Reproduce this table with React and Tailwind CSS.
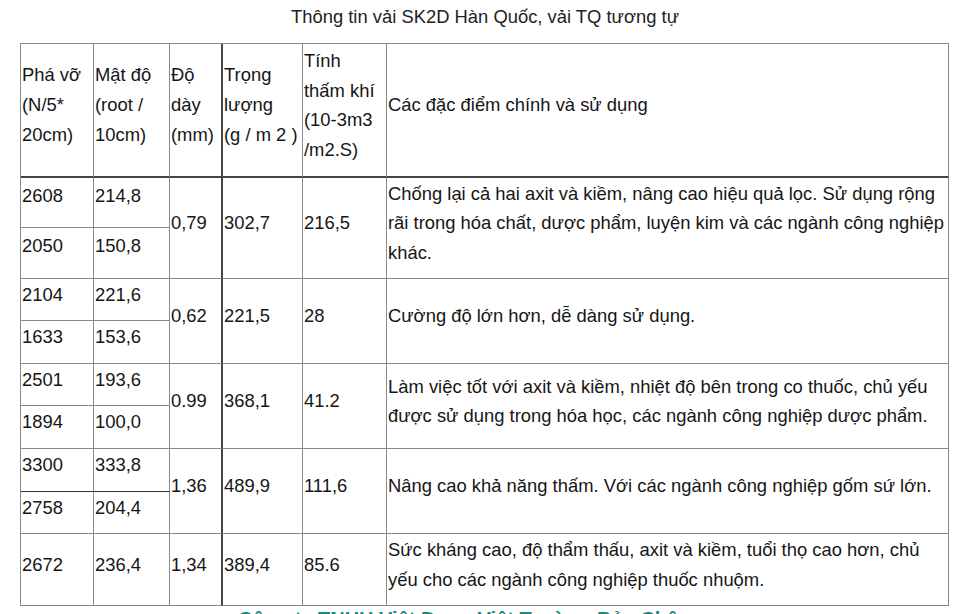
const rows = [
  {
    a: ["2608", "214,8"],
    b: ["2050", "150,8"],
    day: "0,79",
    trong: "302,7",
    tham: "216,5",
    desc: "Chống lại cả hai axit và kiềm, nâng cao hiệu quả lọc. Sử dụng rộng rãi trong hóa chất, dược phẩm, luyện kim và các ngành công nghiệp khác.",
  },
  {
    a: ["2104", "221,6"],
    b: ["1633", "153,6"],
    day: "0,62",
    trong: "221,5",
    tham: "28",
    desc: "Cường độ lớn hơn, dễ dàng sử dụng.",
  },
  {
    a: ["2501", "193,6"],
    b: ["1894", "100,0"],
    day: "0.99",
    trong: "368,1",
    tham: "41.2",
    desc: "Làm việc tốt với axit và kiềm, nhiệt độ bên trong co thuốc, chủ yếu được sử dụng trong hóa học, các ngành công nghiệp dược phẩm.",
  },
  {
    a: ["3300", "333,8"],
    b: ["2758", "204,4"],
    day: "1,36",
    trong: "489,9",
    tham: "111,6",
    desc: "Nâng cao khả năng thấm. Với các ngành công nghiệp gốm sứ lớn.",
    darkSplit: true,
  },
];

const cell = "flex items-center pl-[1px] pr-[1px] pb-[10px] border-r border-b border-[#8a8a8a]";
const dark = "flex items-center pl-[1px] pb-[10px] border-r-2 border-b border-r-[#444] border-b-[#8a8a8a]";

export default function App() {
  return (
    <div
      className="w-[970px] h-[614px] overflow-hidden bg-white text-[#161616] text-[18.4px] leading-[30px] pt-[2px]"
      style={{ fontFamily: '"Liberation Sans", Arial, sans-serif' }}
    >
      <p className="text-center text-[#222] mb-[11px]">
        Thông tin vải SK2D Hàn Quốc, vải TQ tương tự
      </p>

      <div className="ml-[20px] w-[929px] grid grid-cols-[73px_76px_53px_80px_84px_562px] grid-rows-[134px_50px_51px_42px_43px_42px_43px_43px_42px_72px] border-l border-t border-[#8a8a8a]">
        {/* header */}
        <div className={`${cell} border-b-2 border-b-[#444] whitespace-nowrap`}>
          <div>Phá vỡ<br />(N/5*<br />20cm)</div>
        </div>
        <div className={`${cell} border-b-2 border-b-[#444] whitespace-nowrap`}>
          <div>Mật độ<br />(root /<br />10cm)</div>
        </div>
        <div className={`${dark} border-b-2 border-b-[#444] whitespace-nowrap`}>
          <div>Độ<br />dày<br />(mm)</div>
        </div>
        <div className={`${cell} pl-0 border-b-2 border-b-[#444] whitespace-nowrap`}>
          <div>Trọng<br />lượng<br />(g / m 2 )</div>
        </div>
        <div className={`${cell} border-b-2 border-b-[#444] whitespace-nowrap leading-[29.5px]`}>
          <div>Tính<br />thấm khí<br />(10-3m3<br />/m2.S)</div>
        </div>
        <div className={`${cell} border-b-2 border-b-[#444]`}>
          <div>Các đặc điểm chính và sử dụng</div>
        </div>

        {rows.map((r, i) => (
          <div key={i} className="contents">
            <div className={`${cell} ${i === 0 ? "pb-[14px]" : ""}`}>{r.a[0]}</div>
            <div className={`${cell} ${i === 0 ? "pb-[14px]" : ""}`}>{r.a[1]}</div>
            <div className={`${dark} row-span-2`}>{r.day}</div>
            <div className={`${cell} pl-0 row-span-2`}>{r.trong}</div>
            <div className={`${cell} row-span-2`}>{r.tham}</div>
            <div className={`${cell} row-span-2 pb-[8px]`}>
              <div className="leading-[29.5px]">{r.desc}</div>
            </div>
            <div className={`${cell} ${r.darkSplit ? "border-t border-t-[#333] -mt-px" : ""} ${i === 0 ? "pb-[14px]" : ""}`}>{r.b[0]}</div>
            <div className={`${cell} ${r.darkSplit ? "border-t border-t-[#333] -mt-px" : ""} ${i === 0 ? "pb-[14px]" : ""}`}>{r.b[1]}</div>
          </div>
        ))}

        <div className={cell}>2672</div>
        <div className={cell}>236,4</div>
        <div className={dark}>1,34</div>
        <div className={`${cell} pl-0`}>389,4</div>
        <div className={cell}>85.6</div>
        <div className={`${cell} pb-[8px]`}>
          <div className="leading-[29.5px]">
            Sức kháng cao, độ thẩm thấu, axit và kiềm, tuổi thọ cao hơn, chủ yếu cho các ngành công nghiệp thuốc nhuộm.
          </div>
        </div>
      </div>

      <p className="pl-[238px] pt-[3px] font-bold text-[20px] leading-[20px] text-[#178a78] whitespace-nowrap">
        Công ty TNHH Việt Dung Việt Trường Bảo Châu
      </p>
    </div>
  );
}
